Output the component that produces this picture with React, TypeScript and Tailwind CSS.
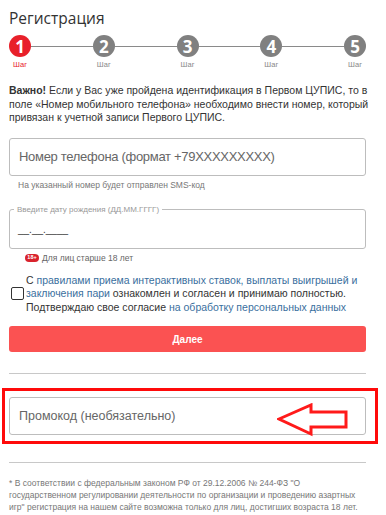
import React from 'react';

const steps = [1, 2, 3, 4, 5];

const font = { fontFamily: '"Liberation Sans", Arial, sans-serif' };

const Stepper: React.FC = () => (
  <div className="mt-[7px]">
    <div className="flex items-center">
      {steps.map((n, i) => (
        <React.Fragment key={n}>
          {i > 0 && <div className="h-px flex-1 bg-[#8a8a8a]" />}
          <div
            className={`flex h-[22px] w-[22px] items-center justify-center rounded-full text-[17px] font-bold leading-none text-white ${
              n === 1 ? 'bg-[#e8202a]' : 'bg-[#808080]'
            }`}
            style={{ fontFamily: '"Open Sans", sans-serif' }}
          >
            {n}
          </div>
        </React.Fragment>
      ))}
    </div>
    <div className="mt-[3px] flex justify-between">
      {steps.map((n) => (
        <span
          key={n}
          className={`w-[22px] text-center text-[7.5px] leading-[9px] ${
            n === 1 ? 'text-[#e8202a]' : 'text-[#888]'
          }`}
        >
          Шаг
        </span>
      ))}
    </div>
  </div>
);

const PromoArrow: React.FC = () => (
  <svg
    className="pointer-events-none absolute left-[272px] top-[12px]"
    width="74"
    height="34"
    viewBox="0 0 74 34"
  >
    <path
      d="M2 16 L34 2 L34 9 L69 9 L69 24 L34 24 L34 31 Z"
      fill="none"
      stroke="#ff1a1a"
      strokeWidth="3"
      strokeLinejoin="miter"
    />
  </svg>
);

const App: React.FC = () => {
  return (
    <div className="min-h-[515px] w-[386px] overflow-hidden bg-white text-[#333]" style={font}>
      <div className="ml-[9px] w-[357px] pt-[8px]">
        <h1
          className="text-[15.5px] leading-[20px] text-[#333]"
          style={{ fontFamily: '"Open Sans", "Noto Sans", sans-serif' }}
        >
          Регистрация
        </h1>

        <Stepper />

        <p className="mt-[15px] whitespace-nowrap text-[10.5px] leading-[13.5px] text-[#333]">
          <b>Важно!</b> Если у Вас уже пройдена идентификация в Первом ЦУПИС, то в<br />
          поле «Номер мобильного телефона» необходимо внести номер, который<br />
          привязан к учетной записи Первого ЦУПИС.
        </p>

        <div className="mt-[13px] flex h-[38px] items-center rounded-[3px] border border-[#bdbdbd] pl-[9px]">
          <span className="text-[13px] tracking-[-0.3px] text-[#666]">
            Номер телефона (формат +79XXXXXXXXX)
          </span>
        </div>
        <p className="mt-[3px] pl-[9px] text-[8.5px] leading-[12px] text-[#777]">
          На указанный номер будет отправлен SMS-код
        </p>

        <fieldset className="mt-[14px] h-[44px] rounded-[3px] border border-[#bdbdbd] pl-[8px] pr-[8px]">
          <legend className="ml-[-4px] px-[3px] text-[8px] leading-[10px] text-[#999]">
            Введите дату рождения (ДД.ММ.ГГГГ)
          </legend>
          <div className="mt-[9px] text-[10px] leading-[12px] text-[#333]">__.__.____</div>
        </fieldset>

        <div className="mt-[3px] flex items-center pl-[16px]">
          <span className="flex h-[8px] w-[14px] items-center justify-center rounded-full bg-[#d9232d] text-[5.5px] font-bold leading-none text-white">
            18+
          </span>
          <span className="ml-[3px] text-[8.5px] leading-[12px] text-[#666]">
            Для лиц старше 18 лет
          </span>
        </div>

        <div className="mt-[10px] flex items-center">
          <div className="ml-[2px] h-[13px] w-[13px] shrink-0 rounded-[2px] border border-[#333]" />
          <p className="ml-[2px] whitespace-nowrap text-[10.5px] leading-[13.5px] text-[#333]">
            С <span className="text-[#3a6f9e]">правилами приема интерактивных ставок, выплаты выигрышей и</span>
            <br />
            <span className="text-[#3a6f9e]">заключения пари</span> ознакомлен и согласен и принимаю полностью.
            <br />
            Подтверждаю свое согласие <span className="text-[#3a6f9e]">на обработку персональных данных</span>
          </p>
        </div>

        <button className="mt-[12px] flex h-[26px] w-full items-center justify-center rounded-[3px] bg-[#fb5252] text-[10px] font-bold text-white">
          Далее
        </button>

        <div className="mt-[21px] h-px w-full bg-[#c8c8c8]" />

        <div className="relative ml-[-7px] mr-[-12px] mt-[14px] border-[3px] border-[#ff0a0a] pb-[6px] pl-[4px] pr-[9px] pt-[6px]">
          <div className="flex h-[38px] items-center rounded-[3px] border border-[#bdbdbd] pl-[9px]">
            <span className="text-[12.5px] text-[#666]">Промокод (необязательно)</span>
          </div>
          <PromoArrow />
        </div>

        <div className="mt-[18px] h-px w-full bg-[#c8c8c8]" />

        <p className="mt-[14px] whitespace-nowrap text-[8.5px] leading-[12px] text-[#777]">
          * В соответствии с федеральным законом РФ от 29.12.2006 № 244-ФЗ "О<br />
          государственном регулировании деятельности по организации и проведению азартных<br />
          игр" регистрация на нашем сайте возможна только для лиц, достигших возраста 18 лет.
        </p>
      </div>
    </div>
  );
};

export default App;
